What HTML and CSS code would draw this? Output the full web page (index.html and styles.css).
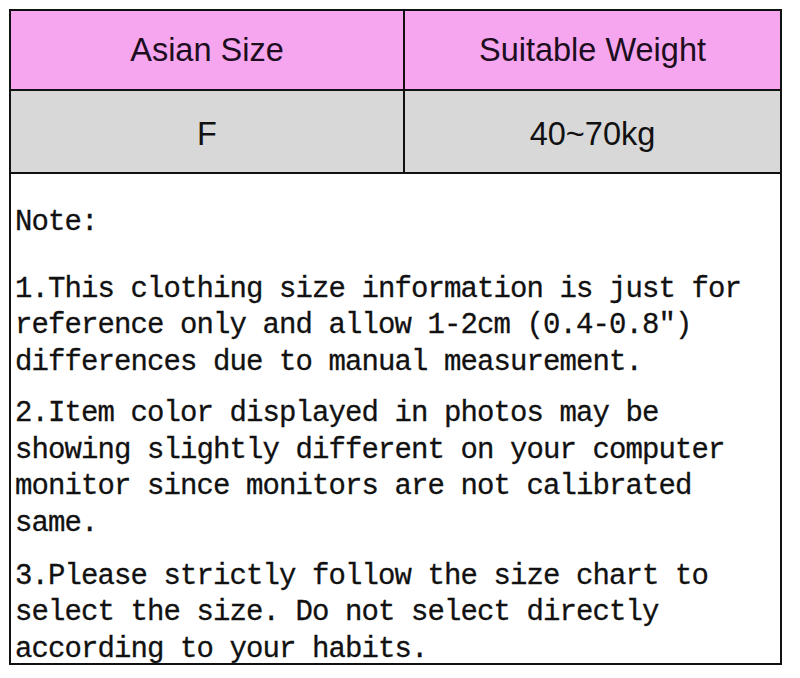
FILE: index.html
```html
<!DOCTYPE html>
<html>
<head>
<meta charset="utf-8">
<link rel="stylesheet" href="styles.css">
</head>
<body>
<div class="chart">
  <div class="row head">
    <div class="cell">Asian Size</div>
    <div class="cell">Suitable Weight</div>
  </div>
  <div class="row data">
    <div class="cell">F</div>
    <div class="cell">40~70kg</div>
  </div>
  <div class="notes">
    <p class="title">Note:</p>
    <p class="item item-1">1.This clothing size information is just for<br>reference only and allow 1-2cm (0.4-0.8″)<br>differences due to manual measurement.</p>
    <p class="item item-2">2.Item color displayed in photos may be<br>showing slightly different on your computer<br>monitor since monitors are not calibrated<br>same.</p>
    <p class="item">3.Please strictly follow the size chart to<br>select the size. Do not select directly<br>according to your habits.</p>
  </div>
</div>
</body>
</html>
```

FILE: styles.css
```css
html, body {
  margin: 0;
  padding: 0;
  background: #ffffff;
}

.chart {
  box-sizing: border-box;
  width: 773px;
  height: 656px;
  margin: 9px 0 0 9px;
  border: 2px solid #111111;
  display: flex;
  flex-direction: column;
}

.row {
  flex-shrink: 0;
  display: grid;
  grid-template-columns: 394px 1fr;
  border-bottom: 2px solid #111111;
  font-family: "Liberation Sans", Arial, sans-serif;
  font-size: 32.5px;
}

.row .cell {
  display: flex;
  align-items: center;
  justify-content: center;
}

.row .cell:first-child {
  border-right: 2px solid #111111;
}

.head {
  height: 78px;
  background: #f6a6ee;
  color: #1d0d20;
}

.data {
  height: 81px;
  background: #d8d8d8;
  color: #111111;
}

.data .cell {
  padding-top: 5px;
}

.notes {
  flex: 1;
  min-height: 0;
  padding: 31px 0 0 4px;
  font-family: "Liberation Mono", "Courier New", monospace;
  font-size: 29px;
  letter-spacing: -0.9px;
  line-height: 36.7px;
  color: #111111;
  -webkit-text-stroke: 0.3px #111111;
}

.notes p {
  margin: 0;
}

.notes .title {
  margin-bottom: 30px;
}

.notes .item-1 {
  margin-bottom: 14px;
}

.notes .item-2 {
  margin-bottom: 16px;
}
```
